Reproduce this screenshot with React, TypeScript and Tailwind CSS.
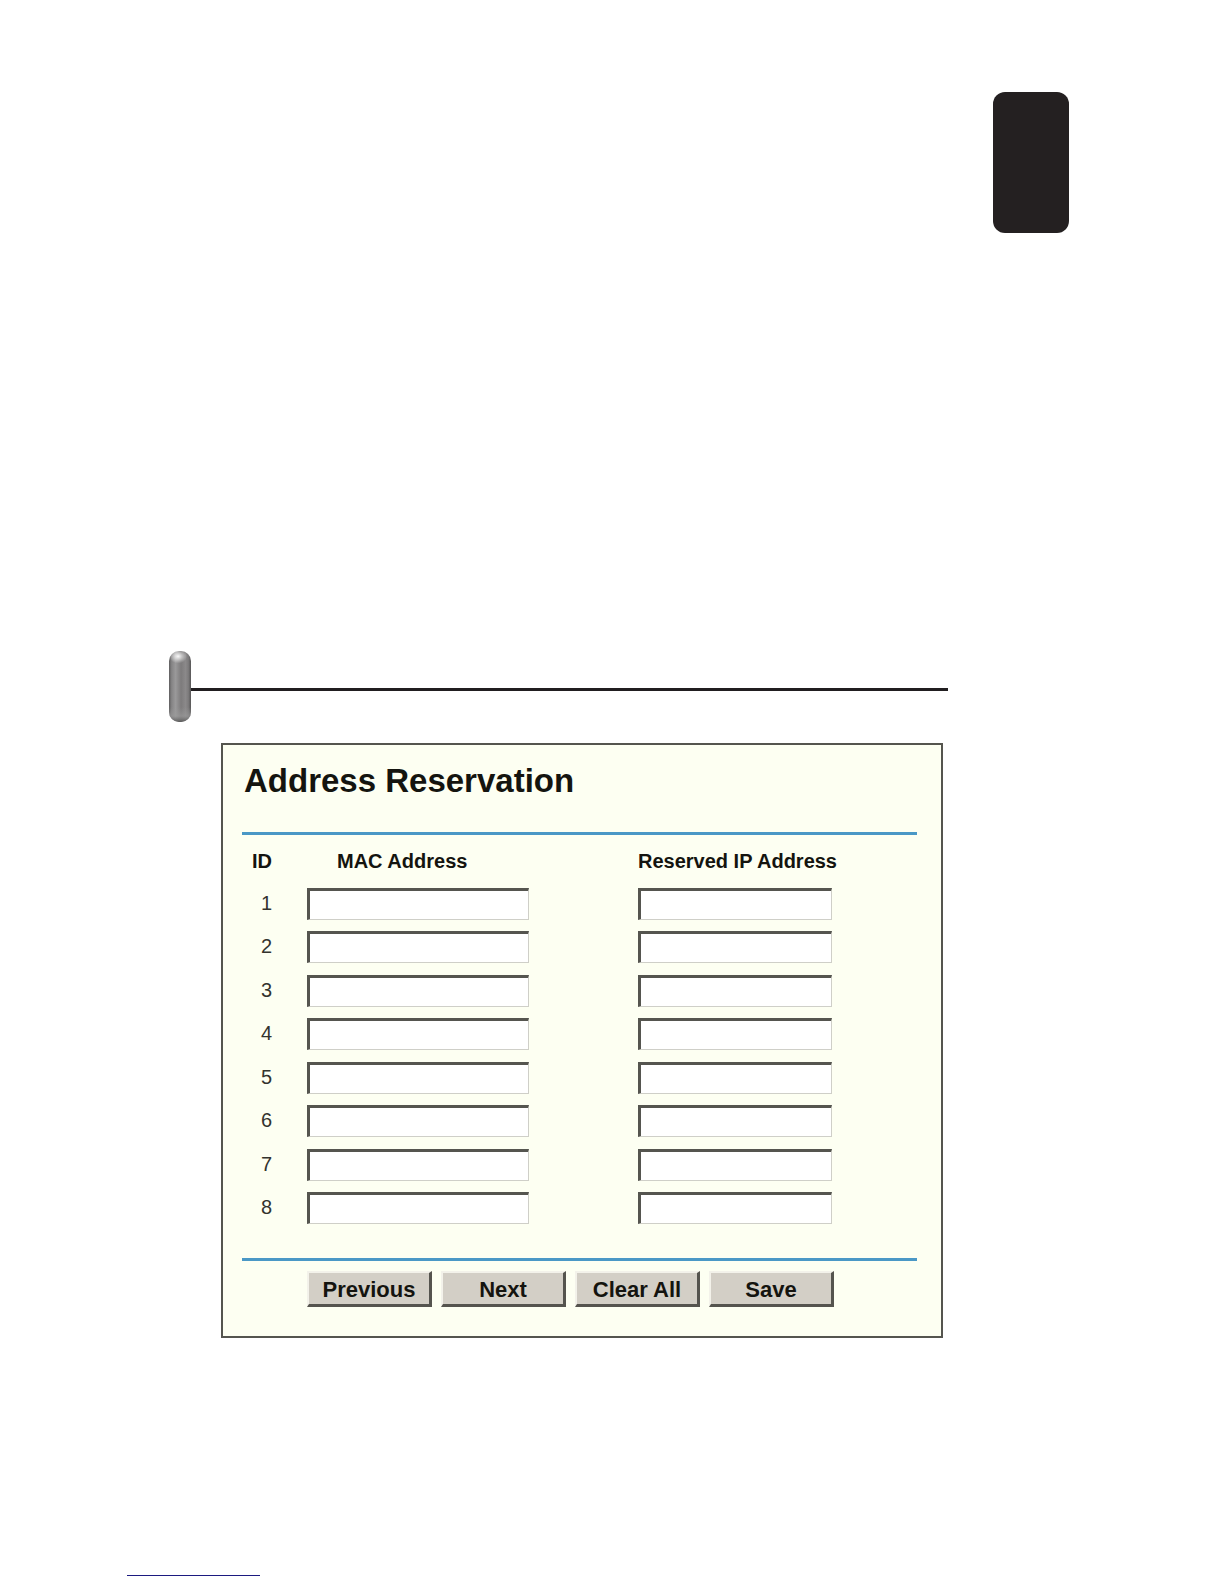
import React, { useState } from 'react';

interface Reservation {
  mac: string;
  ip: string;
}

const ROW_COUNT = 8;

const emptyRows = (): Reservation[] =>
  Array.from({ length: ROW_COUNT }, () => ({ mac: '', ip: '' }));

const fieldClass =
  'block h-8 border-t-3 border-l-3 border-b border-r border-t-[#55554f] border-l-[#55554f] border-b-[#cfcfc8] border-r-[#cfcfc8] bg-white px-1 text-xl outline-none';

const buttonClass =
  'h-9 w-[125px] border-t-2 border-l-2 border-b-3 border-r-3 border-t-[#f3f2ea] border-l-[#f3f2ea] border-b-[#55544e] border-r-[#55544e] bg-[#d3cfc6] pt-0.5 text-[22px] leading-6 font-bold text-[#14140f]';

const SectionMarker: React.FC = () => (
  <div className="flex items-center pl-[169px] pr-[276px]">
    <svg className="h-[72px] w-[22px] shrink-0" viewBox="0 0 22 72" aria-hidden="true">
      <defs>
        <linearGradient id="pill-body" x1="0" y1="0" x2="1" y2="0">
          <stop offset="0" stopColor="#5f5e5f" />
          <stop offset="0.12" stopColor="#858485" />
          <stop offset="0.3" stopColor="#9a999a" />
          <stop offset="0.55" stopColor="#7d7b7c" />
          <stop offset="0.75" stopColor="#8b898a" />
          <stop offset="0.88" stopColor="#7d7b7c" />
          <stop offset="1" stopColor="#565556" />
        </linearGradient>
        <radialGradient id="pill-shine" cx="0.45" cy="0.45" r="0.5">
          <stop offset="0" stopColor="#ffffff" stopOpacity="0.95" />
          <stop offset="1" stopColor="#ffffff" stopOpacity="0" />
        </radialGradient>
        <linearGradient id="pill-base" x1="0" y1="0" x2="0" y2="1">
          <stop offset="0" stopColor="#9a9a9a" stopOpacity="0" />
          <stop offset="0.6" stopColor="#9a9a9a" stopOpacity="0.6" />
          <stop offset="1" stopColor="#555555" stopOpacity="0.9" />
        </linearGradient>
      </defs>
      <rect x="0" y="0" width="22" height="71" rx="10" fill="url(#pill-body)" />
      <ellipse cx="10" cy="6" rx="9" ry="7" fill="url(#pill-shine)" />
      <path d="M0 56H22V61A10 10 0 0 1 12 71H10A10 10 0 0 1 0 61Z" fill="url(#pill-base)" />
    </svg>
    <div className="mt-1 h-[3px] flex-1 bg-[#211e20]" />
  </div>
);

export default function App() {
  const [rows, setRows] = useState<Reservation[]>(emptyRows);

  const updateRow = (index: number, field: keyof Reservation, value: string) => {
    setRows(rows.map((row, i) => (i === index ? { ...row, [field]: value } : row)));
  };

  return (
    <div className="bg-white font-['Liberation_Sans',Arial,sans-serif] text-[#14140f]">
      <header className="flex justify-end pt-[92px] pr-[155px]">
        <div className="h-[141px] w-[76px] rounded-xl bg-[#242021]" />
      </header>

      <main className="pt-[418px]">
        <SectionMarker />

        <section className="mt-5 mr-[281px] ml-[221px] border-2 border-[#55554f] bg-[#fdfff2] pr-6 pb-[29px] pl-[19px]">
          <h1 className="pt-4 pb-[31px] pl-0.5 text-[33px] leading-10 font-bold">
            Address Reservation
          </h1>

          <form onSubmit={e => e.preventDefault()}>
            <div className="border-y-3 border-[#4a98c6] pb-7">
              <table className="w-full table-fixed border-collapse text-left text-xl leading-6">
                <colgroup>
                  <col className="w-[65px]" />
                  <col className="w-[331px]" />
                  <col />
                </colgroup>
                <thead>
                  <tr className="h-[47px]">
                    <th className="pt-1 pl-[10px]">ID</th>
                    <th className="pt-1 pl-[30px]">MAC Address</th>
                    <th className="pt-1">Reserved IP Address</th>
                  </tr>
                </thead>
                <tbody>
                  {rows.map((row, index) => (
                    <tr key={index} className="odd:h-[43px] even:h-11">
                      <td className="pb-0.5 pl-[19px] text-[#33332e]">{index + 1}</td>
                      <td>
                        <input
                          type="text"
                          aria-label={`MAC Address ${index + 1}`}
                          className={`${fieldClass} w-[222px]`}
                          value={row.mac}
                          onChange={e => updateRow(index, 'mac', e.target.value)}
                        />
                      </td>
                      <td>
                        <input
                          type="text"
                          aria-label={`Reserved IP Address ${index + 1}`}
                          className={`${fieldClass} w-[194px]`}
                          value={row.ip}
                          onChange={e => updateRow(index, 'ip', e.target.value)}
                        />
                      </td>
                    </tr>
                  ))}
                </tbody>
              </table>
            </div>

            <div className="flex gap-[9px] pt-[10px] pl-[65px]">
              <button type="button" className={buttonClass}>
                Previous
              </button>
              <button type="button" className={buttonClass}>
                Next
              </button>
              <button type="button" className={buttonClass} onClick={() => setRows(emptyRows())}>
                Clear All
              </button>
              <button type="submit" className={buttonClass}>
                Save
              </button>
            </div>
          </form>
        </section>
      </main>

      <footer className="pt-[237px] pb-2 pl-[127px]">
        <div className="h-px w-[133px] bg-[#1c1a80]" />
      </footer>
    </div>
  );
}
